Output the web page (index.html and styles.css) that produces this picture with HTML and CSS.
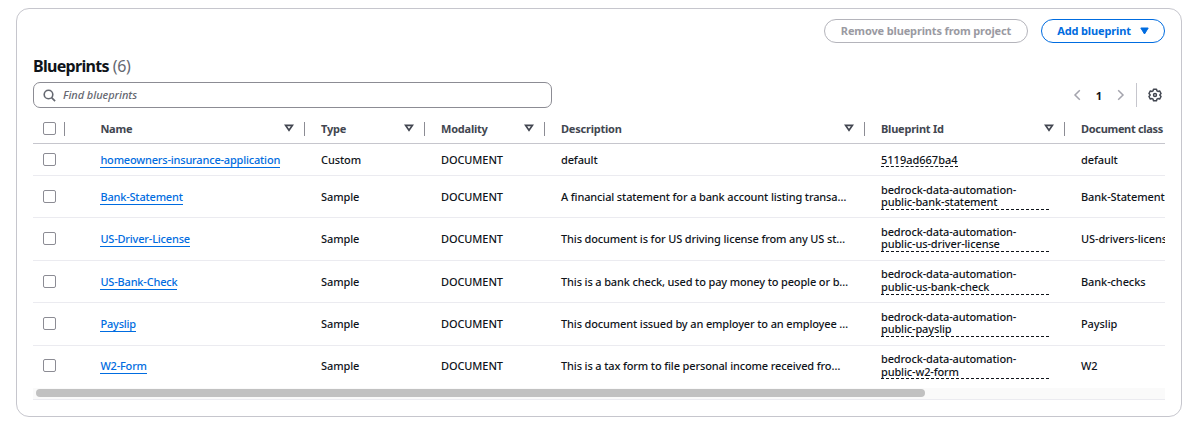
FILE: index.html
```html
<!DOCTYPE html>
<html lang="en">
<head>
<meta charset="utf-8">
<title>Blueprints</title>
<link rel="stylesheet" href="styles.css">
</head>
<body>
<svg class="defs" width="0" height="0">
  <symbol id="sort" viewBox="0 0 10 8"><path d="M1.6 1.400h6.800L5 6.200z" fill="none" stroke="#424650" stroke-width="1.700"/></symbol>
</svg>
<main class="panel">
  <div class="actions">
    <button class="btn btn-disabled"><span>Remove blueprints from project</span></button>
    <button class="btn btn-primary"><span>Add blueprint</span><svg width="9" height="8" viewBox="0 0 9 8"><path d="M.8 1h7.4L4.500 7z" fill="#006ce0" stroke="#006ce0" stroke-linejoin="round"/></svg></button>
  </div>
  <h1 class="title"><span class="title-text">Blueprints</span><span class="count">(6)</span></h1>
  <div class="tools">
    <label class="search">
      <svg width="13" height="13" viewBox="0 0 13 13" fill="none" stroke="#656871" stroke-width="1.600"><circle cx="5.500" cy="5.500" r="4.300"/><path d="M8.600 8.600l3.500 3.500"/></svg>
      <span class="placeholder">Find blueprints</span>
    </label>
    <div class="pager">
      <svg class="chev" width="8" height="12" viewBox="0 0 8 12"><path d="M6.800 1.200L2 6l4.800 4.800"/></svg>
      <span class="page">1</span>
      <svg class="chev" width="8" height="12" viewBox="0 0 8 12"><path d="M1.200 1.200L6 6l-4.800 4.800"/></svg>
      <span class="rule"></span>
      <svg width="14" height="14" viewBox="0 0 16 16" fill="none" stroke="#424650" stroke-width="1.700" stroke-linejoin="round"><path d="M6.300 1.300h3.400l.5 1.900 1.200.7 1.900-.5 1.600 2.900-1.300 1.400v.600l1.300 1.400-1.600 2.900-1.900-.5-1.200.7-.5 1.900H6.300l-.5-1.900-1.200-.7-1.900.5-1.600-2.900 1.300-1.400v-.600L1.100 6.300l1.600-2.900 1.900.5 1.200-.7z"/><circle cx="8" cy="8" r="1.700"/></svg>
    </div>
  </div>
  <div class="table">
    <div class="row head">
      <div class="cell check"><i class="box"></i></div>
      <div class="cell name"><span class="t">Name</span><svg class="sort"><use href="#sort"/></svg></div>
      <div class="cell"><span class="t">Type</span><svg class="sort"><use href="#sort"/></svg></div>
      <div class="cell"><span class="t">Modality</span><svg class="sort"><use href="#sort"/></svg></div>
      <div class="cell"><span class="t">Description</span><svg class="sort"><use href="#sort"/></svg></div>
      <div class="cell"><span class="t">Blueprint Id</span><svg class="sort"><use href="#sort"/></svg></div>
      <div class="cell last"><span class="t tight">Document class</span></div>
    </div>
    <div class="row r1">
      <div class="cell check"><i class="box"></i></div>
      <div class="cell name"><a class="link">homeowners-insurance-application</a></div>
      <div class="cell">Custom</div><div class="cell doc">DOCUMENT</div><div class="cell desc">default</div>
      <div class="cell"><span class="id">5119ad667ba4</span></div><div class="cell last">default</div>
    </div>
    <div class="row sample">
      <div class="cell check"><i class="box"></i></div>
      <div class="cell name"><a class="link">Bank-Statement</a></div>
      <div class="cell">Sample</div><div class="cell doc">DOCUMENT</div><div class="cell desc">A financial statement for a bank account listing transa…</div>
      <div class="cell"><span class="id wide">bedrock-data-automation-<br>public-bank-statement</span></div><div class="cell last">Bank-Statement</div>
    </div>
    <div class="row sample">
      <div class="cell check"><i class="box"></i></div>
      <div class="cell name"><a class="link">US-Driver-License</a></div>
      <div class="cell">Sample</div><div class="cell doc">DOCUMENT</div><div class="cell desc">This document is for US driving license from any US st…</div>
      <div class="cell"><span class="id wide">bedrock-data-automation-<br>public-us-driver-license</span></div><div class="cell last">US-drivers-license</div>
    </div>
    <div class="row sample">
      <div class="cell check"><i class="box"></i></div>
      <div class="cell name"><a class="link">US-Bank-Check</a></div>
      <div class="cell">Sample</div><div class="cell doc">DOCUMENT</div><div class="cell desc">This is a bank check, used to pay money to people or b…</div>
      <div class="cell"><span class="id wide">bedrock-data-automation-<br>public-us-bank-check</span></div><div class="cell last">Bank-checks</div>
    </div>
    <div class="row sample">
      <div class="cell check"><i class="box"></i></div>
      <div class="cell name"><a class="link">Payslip</a></div>
      <div class="cell">Sample</div><div class="cell doc">DOCUMENT</div><div class="cell desc">This document issued by an employer to an employee …</div>
      <div class="cell"><span class="id wide">bedrock-data-automation-<br>public-payslip</span></div><div class="cell last">Payslip</div>
    </div>
    <div class="row sample r6">
      <div class="cell check"><i class="box"></i></div>
      <div class="cell name"><a class="link">W2-Form</a></div>
      <div class="cell">Sample</div><div class="cell doc">DOCUMENT</div><div class="cell desc">This is a tax form to file personal income received fro…</div>
      <div class="cell"><span class="id wide">bedrock-data-automation-<br>public-w2-form</span></div><div class="cell last">W2</div>
    </div>
    <div class="scroll"><div class="thumb"></div></div>
  </div>
</main>
</body>
</html>
```
FILE: styles.css
```css
* { box-sizing: border-box; }
body { margin: 0; padding: 8px 0 0 16px; background: #fff; font: 500 11px/13px "Noto Sans", "Open Sans", sans-serif; color: #0f141a; }
.defs { display: block; height: 0; }
.panel { width: 1166px; height: 409px; border: 1px solid #c6c6cd; border-radius: 13px; padding: 10px 16px 0; }
.actions { display: flex; justify-content: flex-end; gap: 13px; height: 24px; }
.btn { height: 24px; border-radius: 12px; background: #fff; font: 700 11px/14px "Noto Sans", "Open Sans", sans-serif; letter-spacing: -0.14px; display: flex; align-items: center; justify-content: center; padding: 0; white-space: nowrap; }
.btn-disabled { width: 204px; border: 1.500px solid #b4b4bb; color: #9a9aa2; }
.btn-primary { width: 124px; border: 1.500px solid #006ce0; color: #006ce0; gap: 9px; }
.title { display: flex; gap: 4px; margin: 13px 0 0; height: 20px; font-size: 16px; line-height: 20px; }
.title-text { font-weight: 700; letter-spacing: -0.7px; }
.count { font-weight: 400; color: #656871; letter-spacing: -0.4px; }
.tools { display: flex; justify-content: space-between; height: 26px; margin-top: 6px; }
.search { display: flex; align-items: center; gap: 7px; width: 519px; height: 26px; border: 1px solid #8c8c94; border-radius: 7px; padding-left: 9px; }
.placeholder { font-style: italic; color: #656871; letter-spacing: -0.05px; padding-bottom: 1px; }
.pager { display: flex; align-items: center; height: 26px; padding-right: 3.500px; }
.chev { fill: none; stroke: #a4a4ad; stroke-width: 1.500; }
.page { width: 36px; text-align: center; font-weight: 700; }
.rule { width: 1px; height: 24px; background: #c6c6cd; margin: 0 11px 0 10.500px; }
.table { width: 1132px; overflow: hidden; margin-top: 1px; }
.row { display: grid; grid-template-columns: 32px 240px 120px 120px 320px 200px 100px; border-bottom: 1px solid #ebebf0; height: 42.400px; }
.cell { display: flex; align-items: center; padding: 0 15px 0 16px; white-space: nowrap; min-width: 0; letter-spacing: -0.1px; }
.sample .cell { padding-bottom: 0.800px; }
.cell.name { padding-left: 35.400px; }
.cell.check { padding-left: 10px; padding-right: 0; }
.cell.last { padding-right: 0; overflow: hidden; }
.desc { letter-spacing: -0.140px; }
.box { width: 13px; height: 13px; border: 1.500px solid #8c8c94; border-radius: 2px; flex: none; }
.head { height: 35px; border-bottom-color: #c6c6cd; color: #424650; font-weight: 700; padding-top: 4px; align-items: start; }
.head .cell { height: 30px; position: relative; letter-spacing: -0.220px; }
.head .cell:not(.last)::after { content: ""; position: absolute; right: 0; top: 9px; width: 1px; height: 14px; background: #8c8c94; }
.head .check::after { background: #c6c6cd; }
.t { flex: 1; }
.tight { letter-spacing: -0.320px; }
.sort { width: 10px; height: 8px; flex: none; margin-right: -4px; }
.r1 { height: 32px; }
.r6 { border-color: transparent; }
.link { color: #006ce0; border-bottom: 1px solid #006ce0; letter-spacing: -0.190px; padding: 2px 0 1px; }
.id { border-bottom: 1px dashed #0f141a; line-height: 12.500px; letter-spacing: 0; }
.r1 .id { line-height: 13px; }
.wide { width: 168px; padding: 0.900px 0 0.300px; letter-spacing: -0.140px; }
.scroll { height: 12px; background: #fafafa; border-bottom: 1px solid #ebebf0; padding: 1px 0 0 3px; }
.thumb { width: 889px; height: 8px; border-radius: 4px; background: #c1c1c1; }
```
